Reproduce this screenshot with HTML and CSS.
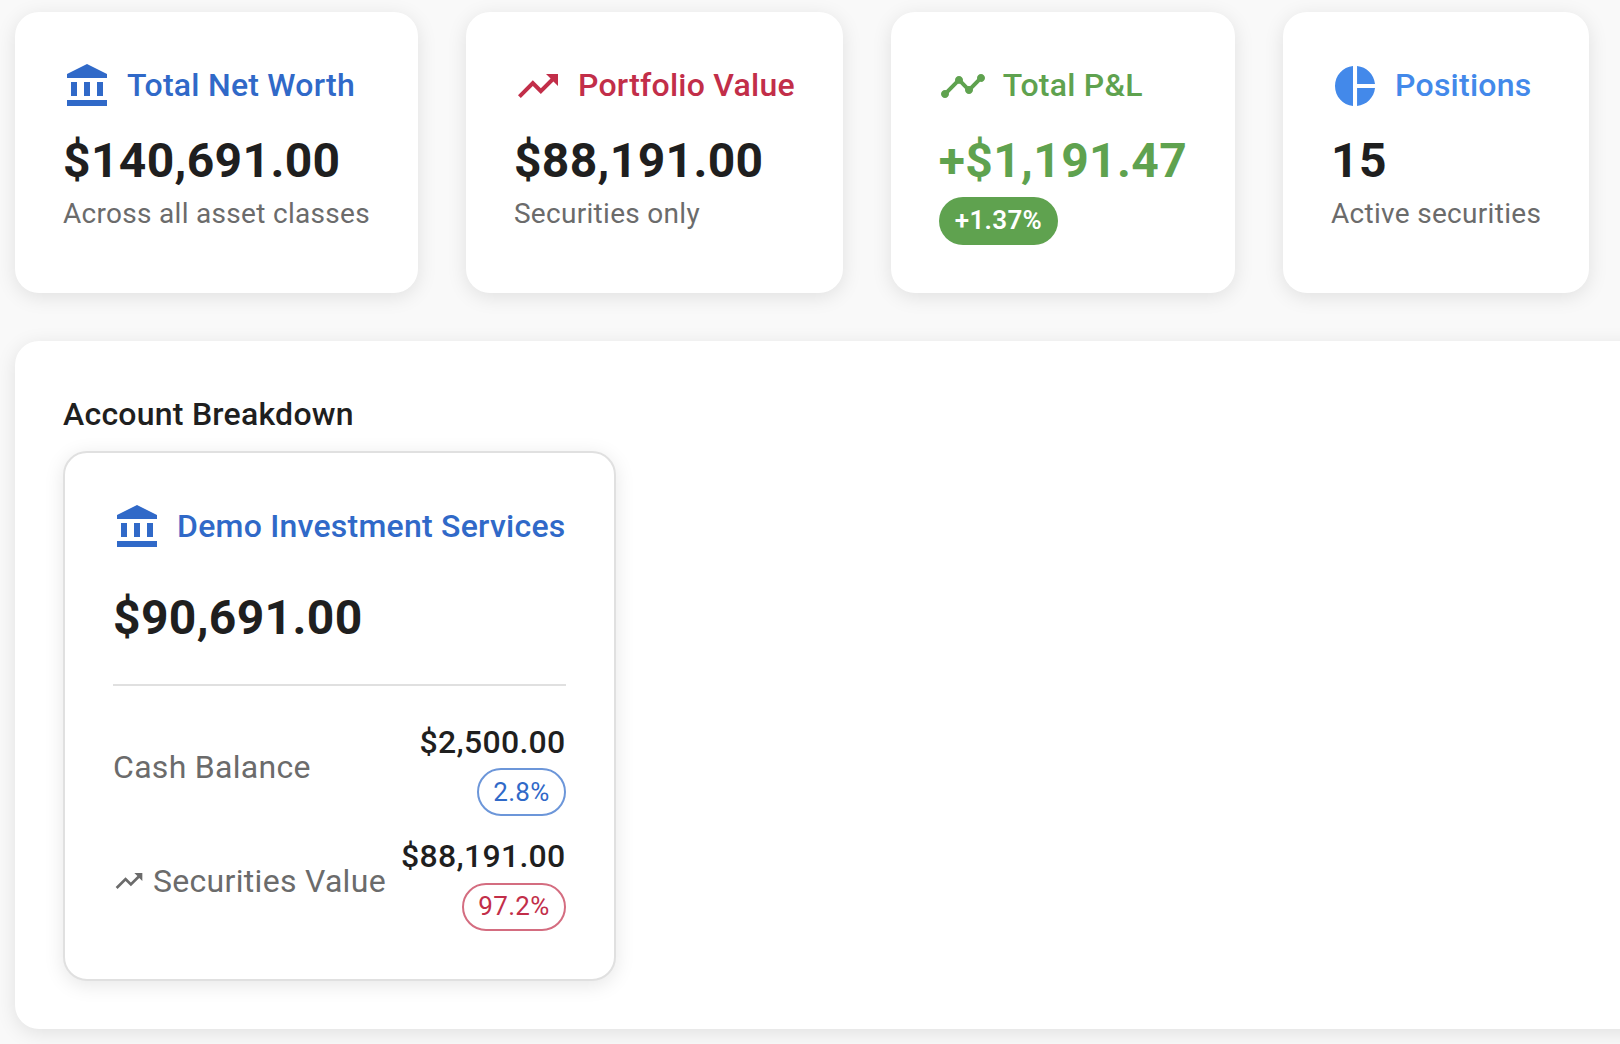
FILE: index.html
```
<!DOCTYPE html>
<html lang="en">
<head>
<meta charset="utf-8">
<title>Portfolio Summary</title>
<link rel="stylesheet" href="styles.css">
</head>
<body>
<svg class="sprite" width="0" height="0" aria-hidden="true">
  <symbol id="bank" viewBox="0 0 24 24"><path d="M4 10h3v7H4zM10.5 10h3v7h-3zM2 19h20v3H2zM17 10h3v7h-3zM12 1 2 6v2h20V6z"/></symbol>
  <symbol id="trend" viewBox="0 0 24 24"><path d="m16 6 2.29 2.29-4.88 4.88-4-4L2 16.59 3.41 18l6-6 4 4 6.3-6.29L22 12V6z"/></symbol>
  <symbol id="timeline" viewBox="0 0 24 24"><path d="M23 8c0 1.1-.9 2-2 2-.18 0-.35-.02-.51-.07l-3.56 3.55c.05.16.07.34.07.52 0 1.1-.9 2-2 2s-2-.9-2-2c0-.18.02-.36.07-.52l-2.55-2.55c-.16.05-.34.07-.52.07s-.36-.02-.52-.07l-4.55 4.56c.05.16.07.33.07.51 0 1.1-.9 2-2 2s-2-.9-2-2 .9-2 2-2c.18 0 .35.02.51.07l4.56-4.55C8.02 9.36 8 9.18 8 9c0-1.1.9-2 2-2s2 .9 2 2c0 .18-.02.36-.07.52l2.55 2.55c.16-.05.34-.07.52-.07s.36.02.52.07l3.55-3.56C19.02 8.35 19 8.18 19 8c0-1.1.9-2 2-2s2 .9 2 2"/></symbol>
  <symbol id="pie" viewBox="0 0 24 24"><path d="M11 2v20c-5.07-.5-9-4.79-9-10s3.93-9.5 9-10m2.03 0v8.99H22c-.47-4.74-4.24-8.52-8.97-8.99m0 11.01V22c4.74-.47 8.5-4.25 8.97-8.99z"/></symbol>
</svg>
<main class="page">
  <section class="summary">
    <article class="card">
      <header class="card-head blue"><svg class="icon"><use href="#bank"/></svg><h2 class="title">Total Net Worth</h2></header>
      <p class="amount">$140,691.00</p>
      <p class="note">Across all asset classes</p>
    </article>
    <article class="card">
      <header class="card-head red"><svg class="icon"><use href="#trend"/></svg><h2 class="title">Portfolio Value</h2></header>
      <p class="amount">$88,191.00</p>
      <p class="note">Securities only</p>
    </article>
    <article class="card">
      <header class="card-head green"><svg class="icon"><use href="#timeline"/></svg><h2 class="title">Total P&amp;L</h2></header>
      <p class="amount green">+$1,191.47</p>
      <span class="chip chip-solid">+1.37%</span>
    </article>
    <article class="card">
      <header class="card-head sky"><svg class="icon"><use href="#pie"/></svg><h2 class="title">Positions</h2></header>
      <p class="amount">15</p>
      <p class="note">Active securities</p>
    </article>
  </section>
  <section class="panel">
    <h2 class="title">Account Breakdown</h2>
    <article class="account">
      <header class="card-head blue"><svg class="icon"><use href="#bank"/></svg><h3 class="title">Demo Investment Services</h3></header>
      <p class="amount account-total">$90,691.00</p>
      <div class="rows">
        <div class="row">
          <span class="label">Cash Balance</span>
          <div class="figures"><span class="value">$2,500.00</span><span class="chip chip-outline blue">2.8%</span></div>
        </div>
        <div class="row">
          <span class="label"><svg class="icon-small"><use href="#trend"/></svg>Securities Value</span>
          <div class="figures"><span class="value">$88,191.00</span><span class="chip chip-outline red">97.2%</span></div>
        </div>
      </div>
    </article>
  </section>
</main>
</body>
</html>
```

FILE: styles.css
```
* { box-sizing: border-box; }

body {
  margin: 0;
  min-height: 100vh;
  background: #f9f9f9;
  color: #1f1f1f;
  font-family: Roboto, "Liberation Sans", sans-serif;
  letter-spacing: 0.3px;
}

h2, h3, p { margin: 0; }

.sprite { display: block; }

.page {
  display: flex;
  flex-direction: column;
  gap: 48px;
  min-height: 100vh;
  padding: 12px 0 15px 15px;
  overflow-x: clip;
}

.summary { display: flex; gap: 48px; }

.card {
  display: flex;
  flex-direction: column;
  align-items: flex-start;
  height: 281px;
  padding: 48px;
  border-radius: 24px;
  background: #fff;
  box-shadow: 0 4px 20px rgba(0, 0, 0, 0.1);
}

.card-head { display: flex; align-items: center; gap: 16px; }

.icon { width: 48px; height: 48px; fill: currentColor; }
.icon-small { width: 32px; height: 32px; margin-bottom: 2.4px; fill: currentColor; }

.title {
  font-size: 32px;
  font-weight: 500;
  line-height: 51.2px;
  letter-spacing: 0.0075em;
  white-space: nowrap;
}

.amount {
  margin: 16px 0 2.4px;
  font-size: 48px;
  font-weight: 700;
  line-height: 67.2px;
  letter-spacing: 0.00735em;
}

.note {
  color: #6b6b6b;
  font-size: 28px;
  line-height: 33.6px;
  letter-spacing: 0.01071em;
  white-space: nowrap;
}

.blue { color: #3069c8; }
.red { color: #c22e49; }
.green { color: #5fa24f; }
.sky { color: #4389ea; }

.chip {
  display: inline-flex;
  align-items: center;
  height: 48px;
  padding: 0 16px 1px;
  border-radius: 24px;
  font-size: 26px;
  line-height: 39px;
}

.chip-solid { background: #5fa24f; color: #fff; font-weight: 600; }
.chip-outline { padding: 0 14px; border: 2px solid; }
.chip-outline.blue { border-color: #6c96d9; }
.chip-outline.red { border-color: #d46d80; }

.panel {
  height: 688px;
  margin-right: -48px;
  padding: 48px;
  border-radius: 24px;
  background: #fff;
  box-shadow: 0 4px 20px rgba(0, 0, 0, 0.1);
}

.account {
  width: 552.6px;
  height: 530px;
  margin-top: 10.8px;
  padding: 48px;
  border: 2px solid #e0e0e0;
  border-radius: 24px;
  background: #fff;
  box-shadow: 0 4px 20px rgba(0, 0, 0, 0.1);
}

.account-total {
  margin: 32px 0 30.8px;
  padding-bottom: 32.7px;
  border-bottom: 2px solid #e0e0e0;
}

.rows { display: flex; flex-direction: column; gap: 15.3px; }
.row { display: flex; justify-content: space-between; align-items: center; }
.label { display: flex; align-items: center; gap: 8px; padding-top: 2.2px; color: #6b6b6b; font-size: 32px; line-height: 51.2px; }
.figures { display: flex; flex-direction: column; align-items: flex-end; }
.value { font-size: 32px; font-weight: 500; line-height: 51.2px; }
```
